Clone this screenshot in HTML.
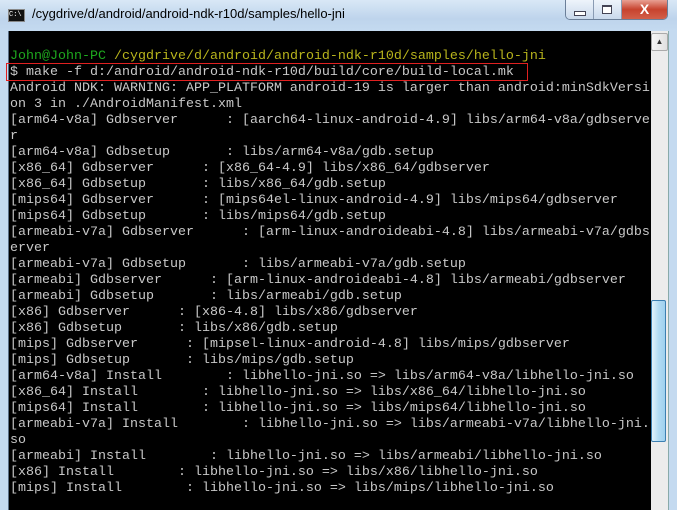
<!DOCTYPE html>
<html><head><meta charset="utf-8"><style>
html,body{margin:0;padding:0;width:677px;height:510px;overflow:hidden;background:#c4daf0}
.title{position:absolute;left:0;top:0;width:677px;height:31px;background:linear-gradient(#d9e8f6,#bed4ec 60%,#c4daf0)}
.ttext{position:absolute;left:32px;top:6px;font:13px "Liberation Sans",sans-serif;color:#000}
.ico{position:absolute;left:8px;top:9px;width:15px;height:11px;background:#111;border:1px solid #888;color:#fff;font:7px "Liberation Mono",monospace;line-height:10px}
.btns{position:absolute;left:565px;top:0;height:19px;width:101px;border:1px solid #6b7f99;border-top:none;border-radius:0 0 5px 5px;overflow:hidden;display:flex}
.b{width:27px;height:19px;background:linear-gradient(#eef4fb,#c9d9ec);border-right:1px solid #8a9bb3;position:relative}
.b i{position:absolute;display:block}
.bx{flex:1;background:linear-gradient(#e8a093,#c7432e 50%,#d2604a);color:#fff;font:bold 14px "Liberation Sans";text-align:center;line-height:18px}
.lb{position:absolute;left:0;top:31px;width:8px;height:479px;background:#c4daf0;border-right:1px solid #5a6e86}
.term{position:absolute;left:9px;top:31px;width:642px;height:479px;background:#000}
pre{margin:0;position:absolute;left:10px;top:49px;font:13.33px/16px "Liberation Mono",monospace;color:#c8c8c8;letter-spacing:0}
.g{color:#1ea81e}.y{color:#b8b41c}
.red{position:absolute;left:6px;top:63px;width:520px;height:16px;border:1px solid #e02020}
.sb{position:absolute;left:651px;top:31px;width:17px;height:479px;background:#ececec}
.up{position:absolute;left:651px;top:33px;width:15px;height:16px;background:linear-gradient(90deg,#f6f6f6,#e0e0e0);border:1px solid #aaa;border-radius:2px;font:8px sans-serif;text-align:center;line-height:16px;color:#333}
.th{position:absolute;left:651px;top:300px;width:13px;height:140px;border:1px solid #3c7fb1;border-radius:2px;background:linear-gradient(90deg,#e3f4fc,#b2dcf4 50%,#9fd0ee)}
.rb{position:absolute;left:668px;top:31px;width:9px;height:479px;background:#c4daf0;border-left:1px solid #8aa}
</style></head><body>
<div class="title"><div class="ico">C:\</div><div class="ttext">/cygdrive/d/android/android-ndk-r10d/samples/hello-jni</div>
<div class="btns"><div class="b"><i style="left:8px;top:11px;width:10px;height:3px;background:#fff;border:1px solid #445"></i></div><div class="b"><i style="left:8px;top:5px;width:8px;height:6px;border:1px solid #445;border-top-width:2px;background:#fff"></i></div><div class="bx">X</div></div></div>
<div class="lb"></div>
<div class="term"></div>
<pre><span class="g">John@John-PC</span> <span class="y">/cygdrive/d/android/android-ndk-r10d/samples/hello-jni</span>
$ make -f d:/android/android-ndk-r10d/build/core/build-local.mk
Android NDK: WARNING: APP_PLATFORM android-19 is larger than android:minSdkVersi
on 3 in ./AndroidManifest.xml
[arm64-v8a] Gdbserver      : [aarch64-linux-android-4.9] libs/arm64-v8a/gdbserve
r
[arm64-v8a] Gdbsetup       : libs/arm64-v8a/gdb.setup
[x86_64] Gdbserver      : [x86_64-4.9] libs/x86_64/gdbserver
[x86_64] Gdbsetup       : libs/x86_64/gdb.setup
[mips64] Gdbserver      : [mips64el-linux-android-4.9] libs/mips64/gdbserver
[mips64] Gdbsetup       : libs/mips64/gdb.setup
[armeabi-v7a] Gdbserver      : [arm-linux-androideabi-4.8] libs/armeabi-v7a/gdbs
erver
[armeabi-v7a] Gdbsetup       : libs/armeabi-v7a/gdb.setup
[armeabi] Gdbserver      : [arm-linux-androideabi-4.8] libs/armeabi/gdbserver
[armeabi] Gdbsetup       : libs/armeabi/gdb.setup
[x86] Gdbserver      : [x86-4.8] libs/x86/gdbserver
[x86] Gdbsetup       : libs/x86/gdb.setup
[mips] Gdbserver      : [mipsel-linux-android-4.8] libs/mips/gdbserver
[mips] Gdbsetup       : libs/mips/gdb.setup
[arm64-v8a] Install        : libhello-jni.so => libs/arm64-v8a/libhello-jni.so
[x86_64] Install        : libhello-jni.so => libs/x86_64/libhello-jni.so
[mips64] Install        : libhello-jni.so => libs/mips64/libhello-jni.so
[armeabi-v7a] Install        : libhello-jni.so => libs/armeabi-v7a/libhello-jni.
so
[armeabi] Install        : libhello-jni.so => libs/armeabi/libhello-jni.so
[x86] Install        : libhello-jni.so => libs/x86/libhello-jni.so
[mips] Install        : libhello-jni.so => libs/mips/libhello-jni.so</pre>
<div class="red"></div>
<div class="sb"></div>
<div class="up">▲</div>
<div class="th"></div>
<div class="rb"></div>
</body></html>
